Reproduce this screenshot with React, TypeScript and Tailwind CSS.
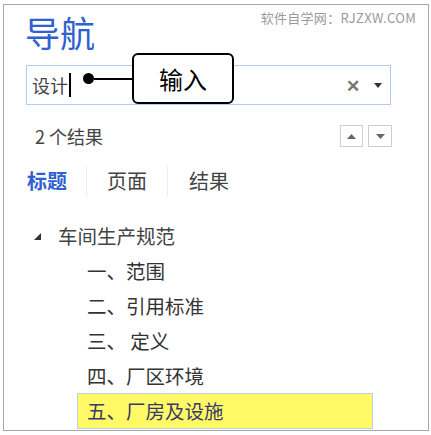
const font = { fontFamily: '"Noto Sans CJK SC", "Noto Sans", sans-serif' }

const items = ['一、范围', '二、引用标准', '三、 定义', '四、厂区环境']

export default function App() {
  return (
    <div className="h-[435px] w-[431px] bg-white pl-[3px] pt-[4px]" style={font}>
      <div className="relative h-[427px] w-[426px] border border-[#a8a8a8] bg-white">
        <div className="flex items-start justify-between pl-[21px] pr-[12px]">
          <div className="mt-[7px] text-[35px] leading-[40px] text-[#2f62d0]">导航</div>
          <div className="mt-[5px] text-[13px] leading-[16px] tracking-[0.3px] text-[#9a9a9a]">
            软件自学网：RJZXW.COM
          </div>
        </div>

        <div className="ml-[22px] mt-[13px] flex h-[40px] w-[365px] items-center border border-[#b5cbec] pl-[5px] pr-[8px]">
          <span className="text-[18px] text-[#444]">设计</span>
          <span className="ml-[1px] h-[24px] w-[1.5px] bg-black" />
          <span className="flex-1" />
          <span className="text-[17px] font-bold text-[#777]">✕</span>
          <svg className="ml-[14px]" width="8" height="5" viewBox="0 0 8 5">
            <path d="M0 0 L8 0 L4 5 Z" fill="#333" />
          </svg>
        </div>

        <div className="ml-[31px] mr-[36px] mt-[18px] flex items-center justify-between">
          <span className="text-[18px] leading-[26px] text-[#444]">2 个结果</span>
          <div className="flex gap-[5px]">
            <div className="flex h-[22px] w-[23px] items-center justify-center border border-[#cfcfcf]">
              <svg width="9" height="5" viewBox="0 0 9 5">
                <path d="M0 5 L9 5 L4.5 0 Z" fill="#666" />
              </svg>
            </div>
            <div className="flex h-[22px] w-[24px] items-center justify-center border border-[#cfcfcf]">
              <svg width="9" height="5" viewBox="0 0 9 5">
                <path d="M0 0 L9 0 L4.5 5 Z" fill="#666" />
              </svg>
            </div>
          </div>
        </div>

        <div className="ml-[23px] mt-[17px] flex items-center text-[20px] leading-[30px]">
          <span className="pr-[19px] font-bold text-[#2f62d0]">标题</span>
          <span className="h-[30px] w-px bg-[#eeeeee]" />
          <span className="px-[20px] text-[#444]">页面</span>
          <span className="h-[30px] w-px bg-[#eeeeee]" />
          <span className="px-[21px] text-[#444]">结果</span>
        </div>

        <div className="ml-[30px] mt-[27px] flex items-center gap-[17px] text-[19.5px] leading-[26px] text-[#444]">
          <svg width="7" height="7" viewBox="0 0 7 7">
            <path d="M7 0 L7 7 L0 7 Z" fill="#333" />
          </svg>
          <span>车间生产规范</span>
        </div>

        <div className="mt-[9px] flex flex-col">
          {items.map((t) => (
            <div key={t} className="ml-[83px] h-[35px] whitespace-pre text-[19.5px] leading-[26px] text-[#333]">
              {t}
            </div>
          ))}
          <div className="ml-[73px] mt-[-5px] flex h-[36px] w-[296px] items-center border border-[#b8d0ec] bg-[#fffa66] pl-[9px] text-[19.5px] text-[#3a3a6a]">
            五、厂房及设施
          </div>
        </div>

        <div className="absolute left-[79px] top-[48px] flex items-center">
          <span className="h-[11px] w-[11px] rounded-full bg-black" />
          <span className="h-[2px] w-[38px] bg-black" />
          <div className="flex h-[51px] w-[102px] items-center justify-center rounded-[6px] border-2 border-black bg-white text-[24px] text-black">
            输入
          </div>
        </div>
      </div>
    </div>
  )
}
